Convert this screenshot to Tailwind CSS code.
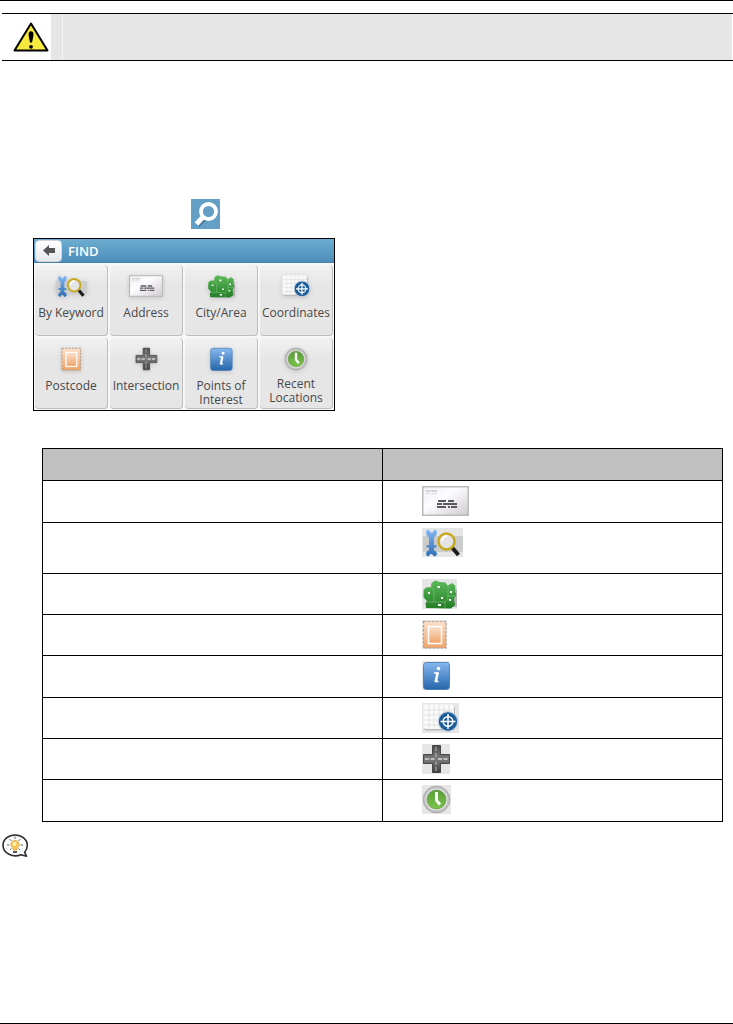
<!DOCTYPE html>
<html lang="en">
<head>
    <meta charset="UTF-8">
    <meta name="viewport" content="width=device-width, initial-scale=1.0">
    <title>Find</title>
    <script src="https://cdn.jsdelivr.net/npm/@tailwindcss/browser@4"></script>
</head>
<body class="bg-white font-['Open_Sans',sans-serif]">
    <!-- Shared icons -->
    <svg class="absolute size-0" aria-hidden="true">
        <defs>
            <linearGradient id="paper" x1="0" y1="0" x2="1" y2="1"><stop offset="0" stop-color="#f0eff1"/><stop offset=".4" stop-color="#fdfcfe"/><stop offset="1" stop-color="#cfcbd0"/></linearGradient>
            <linearGradient id="wrench" x1="0" y1="0" x2="0" y2="1"><stop offset="0" stop-color="#84b8f0"/><stop offset="1" stop-color="#2f6fb5"/></linearGradient>
            <linearGradient id="green" x1="0" y1="0" x2="0" y2="1"><stop offset="0" stop-color="#5dbb5a"/><stop offset="1" stop-color="#237d27"/></linearGradient>
            <linearGradient id="orange" x1="0" y1="0" x2="0" y2="1"><stop offset="0" stop-color="#fbe0cb"/><stop offset="1" stop-color="#efa468"/></linearGradient>
            <linearGradient id="blue" x1="0" y1="0" x2="0" y2="1"><stop offset="0" stop-color="#87b8ef"/><stop offset="1" stop-color="#2565ab"/></linearGradient>
            <linearGradient id="road" x1="0" y1="0" x2="0" y2="1"><stop offset="0" stop-color="#4b4b4b"/><stop offset=".5" stop-color="#7c7c7c"/><stop offset="1" stop-color="#3f3f3f"/></linearGradient>
            <linearGradient id="lime" x1="0" y1="0" x2="0" y2="1"><stop offset="0" stop-color="#5a9c3a"/><stop offset="1" stop-color="#7cc44c"/></linearGradient>
        </defs>
        <symbol id="address" viewBox="0 0 47 30">
            <rect x=".75" y=".75" width="45.5" height="28.5" fill="url(#paper)" stroke="#bcbabd" stroke-width="1.5"/>
            <path d="M4 5h4M9 5h6" stroke="#d3d1d4" stroke-width="2"/>
            <path d="M4 7.7h5M10 7.7h5" stroke="#dcdadd"/>
            <path d="M16 15h8M26 15h6M15 18h5M21 18h14M15 21h9M26 21h2M29 21h6" stroke="#5a585b" stroke-width="1.9"/>
        </symbol>
        <symbol id="keyword" viewBox="0 0 41 29">
            <path d="M1 8h40v16H1z" fill="#cccccd"/>
            <path d="M4 3L6.500 1.500 8.500 4.500h2L12.500 1.500 15 3 14.500 7 12 9.500V17h2.500v2.500H12V22l2.500 2L15 27l-3 1.500-2-2.500H8.500l-2 2.500L4 27l.5-3L7 22v-2.500H4.500V17H7V9.500L4.500 7z" fill="url(#wrench)"/>
            <path d="M30.500 20l6 7" stroke="#1c1c1c" stroke-width="4"/>
            <circle cx="24.500" cy="13.500" r="8" fill="#e4e4e4" stroke="#c7a91e" stroke-width="2.500"/>
            <path d="M20 13a5 5 0 0 1 5-5" fill="none" stroke="#fff" stroke-width="2"/>
        </symbol>
        <symbol id="city" viewBox="0 0 35 30">
            <path d="M7 10h28v18H9z" fill="#b5b5b5"/>
            <path d="M4 29L3.500 24 5 22 1.500 18.500V11L4 8.500 9 8 9.500 4 13 1.500 18 3 23.500 3.500 25.500 6.500 30.500 4 33.500 7 33 12 34.500 16 32 19.500 33 26 29 29.500z" fill="url(#green)"/>
            <path d="M9 8l3 4v11M4 23h19l3-3V7M26 17h8M23 23v6" fill="none" stroke="#78bd78" stroke-width=".7"/>
            <path d="M15.500 7h2.500v2h-2.500zM6 13h2v2H6zM28 12h2v2h-2zM19 18h2v2h-2zM27 20h2v2h-2zM16 25h3v2h-3z" fill="#fff"/>
        </symbol>
        <symbol id="postcode" viewBox="0 0 25 29">
            <rect x="1.500" y="1.500" width="22.500" height="26.500" fill="url(#orange)" stroke="#b39f90" stroke-width="1.200" stroke-dasharray="2.500 1.500"/>
            <rect x="6.500" y="6.500" width="13" height="17" fill="url(#orange)" stroke="#fff" stroke-width="1.500"/>
        </symbol>
        <symbol id="info" viewBox="0 0 28 29">
            <rect x="1.500" y="1.500" width="26" height="27" rx="3" fill="url(#blue)" stroke="#3f76b5" stroke-width=".8"/>
            <circle cx="16.500" cy="7.500" r="1.800" fill="#fff"/>
            <path d="M12 12h4.500M13.500 20.500h3" fill="none" stroke="#fff" stroke-width="1.500"/>
            <path d="M15.700 11.500l-2 9.500" stroke="#fff" stroke-width="2.600"/>
        </symbol>
        <symbol id="coords" viewBox="0 0 37 30">
            <rect x="2" y="2.500" width="31" height="25" rx="3" fill="#b9b9b9"/>
            <rect x="1.500" y="1.500" width="30.500" height="24.500" rx="3" fill="#fafafa"/>
            <path d="M7 2v24M12 2v24M17 2v24M22 2v24M27 2v24M2 7h30M2 12h30M2 17h30M2 22h30" stroke="#dcdcdc" stroke-width=".8"/>
            <circle cx="26" cy="18.500" r="9.800" fill="#1c5c99" stroke="#c5d3df" stroke-width="1.200"/>
            <circle cx="26" cy="18.500" r="4.800" fill="none" stroke="#fff" stroke-width="1.500"/>
            <path d="M26 11v15M18.500 18.500h15" stroke="#fff" stroke-width="1.500"/>
        </symbol>
        <symbol id="intersection" viewBox="0 0 28 30">
            <path d="M10.500 1.500h8v9h9v9h-9v9h-8v-9h-9v-9h9z" fill="url(#road)" stroke="#474747"/>
            <path d="M14 3v4M14 9v4M14 18v3M14 23v4" stroke="#c9c9c9" stroke-width=".9"/>
            <path d="M3 15h4M8.500 15h4M16 15h4M21.500 15h4" stroke="#fff" stroke-width="1.200"/>
        </symbol>
        <symbol id="recent" viewBox="0 0 29 29">
            <circle cx="14.500" cy="14.500" r="13.300" fill="#c2c2c2" stroke="#a8a8a8"/>
            <circle cx="14.500" cy="14.500" r="11" fill="#e3e3e3"/>
            <circle cx="14.500" cy="14.500" r="9.500" fill="url(#lime)" stroke="#538b38" stroke-width=".6"/>
            <path d="M14.500 7v8.500l3.500 4" fill="none" stroke="#fff" stroke-width="2.800"/>
        </symbol>
    </svg>

    <div class="flex min-h-screen flex-col border-t border-b border-black">
        <!-- Warning -->
        <div class="mt-3 ml-[2px] flex h-12 border-y border-black">
            <div class="flex w-[49px] items-center justify-center pl-2">
                <svg class="h-[30px] w-[36px]" viewBox="0 0 36 30" role="img" aria-label="Warning">
                    <path d="M18 1.500L34.500 28.500h-33z" fill="#f7e93d" stroke="#000" stroke-width="2" stroke-linejoin="round"/>
                    <path d="M18 9.200c3.300 0 2.800 3.500 1 11.300h-2c-1.800-7.800-2.300-11.300 1-11.300z"/>
                    <circle cx="18" cy="24.800" r="1.900"/>
                </svg>
            </div>
            <div class="w-3 border-r border-gray-100 bg-[#e6e6e6]"></div>
            <div class="mr-px flex-1 bg-[#e6e6e6]"></div>
        </div>

        <button class="mt-[138px] ml-[191px] h-[30px] w-[29px] bg-[#649fc5]" aria-label="Find">
            <svg viewBox="0 0 29 30">
                <path d="M14 18.500l-7.500 7.500" stroke="#3f7093" stroke-width="5"/>
                <path d="M13 17l-7.500 8" stroke="#fff" stroke-width="5"/>
                <circle cx="17.500" cy="12.500" r="7.500" fill="#649fc5" stroke="#fff" stroke-width="3.800"/>
            </svg>
        </button>

        <!-- Find menu -->
        <div class="mt-[9px] ml-[33px] w-[302px] border border-black bg-[#f7f7f7]">
            <div class="flex h-6 items-center gap-[6px] border-b border-[#447fa8] bg-linear-to-b from-[#6dadd0] to-[#4d8dbb] pl-px">
                <button class="flex h-[22px] w-[27px] items-center justify-center rounded-sm border border-gray-300 bg-linear-to-b from-white to-gray-200" aria-label="Back">
                    <svg class="h-[11px] w-3" viewBox="0 0 12 11"><path d="M0 5.500L6 0v3h6v5H6v3z" fill="#555"/></svg>
                </button>
                <span class="text-[13px] leading-4 font-semibold text-white">FIND</span>
            </div>
            <div class="grid grid-cols-4 gap-[2px] p-px pt-[2px] text-xs leading-[14px] text-[#484848]">
                <button class="flex h-[71px] flex-col items-center gap-2 rounded-sm border-r border-b border-[#bdbdbd] bg-linear-to-b from-[#f2f2f2] to-[#e6e6e6] to-30% pt-[9px]">
                    <svg class="h-6 w-8 drop-shadow-sm"><use href="#keyword"/></svg>
                    <span class="whitespace-nowrap">By Keyword</span>
                </button>
                <button class="flex h-[71px] flex-col items-center gap-2 rounded-sm border-r border-b border-[#bdbdbd] bg-linear-to-b from-[#f2f2f2] to-[#e6e6e6] to-30% pt-[9px]">
                    <svg class="h-6 w-[34px] drop-shadow-sm"><use href="#address"/></svg>
                    <span class="whitespace-nowrap">Address</span>
                </button>
                <button class="flex h-[71px] flex-col items-center gap-2 rounded-sm border-r border-b border-[#bdbdbd] bg-linear-to-b from-[#f2f2f2] to-[#e6e6e6] to-30% pt-[9px]">
                    <svg class="h-6 w-8 drop-shadow-sm"><use href="#city"/></svg>
                    <span class="whitespace-nowrap">City/Area</span>
                </button>
                <button class="flex h-[71px] flex-col items-center gap-2 rounded-sm border-r border-b border-[#bdbdbd] bg-linear-to-b from-[#f2f2f2] to-[#e6e6e6] to-30% pt-[9px]">
                    <svg class="h-6 w-8 drop-shadow-sm"><use href="#coords"/></svg>
                    <span class="whitespace-nowrap">Coordinates</span>
                </button>
                <button class="flex h-[71px] flex-col items-center gap-2 rounded-sm border-r border-b border-[#bdbdbd] bg-linear-to-b from-[#f2f2f2] to-[#e6e6e6] to-30% pt-[9px]">
                    <svg class="h-6 w-8 drop-shadow-sm"><use href="#postcode"/></svg>
                    <span class="whitespace-nowrap">Postcode</span>
                </button>
                <button class="flex h-[71px] flex-col items-center gap-2 rounded-sm border-r border-b border-[#bdbdbd] bg-linear-to-b from-[#f2f2f2] to-[#e6e6e6] to-30% pt-[9px]">
                    <svg class="h-6 w-8 drop-shadow-sm"><use href="#intersection"/></svg>
                    <span class="whitespace-nowrap">Intersection</span>
                </button>
                <button class="flex h-[71px] flex-col items-center gap-2 rounded-sm border-r border-b border-[#bdbdbd] bg-linear-to-b from-[#f2f2f2] to-[#e6e6e6] to-30% pt-[9px]">
                    <svg class="h-6 w-8 drop-shadow-sm"><use href="#info"/></svg>
                    <span class="whitespace-nowrap">Points of<br>Interest</span>
                </button>
                <button class="flex h-[71px] flex-col items-center gap-[6px] rounded-sm border-r border-b border-[#bdbdbd] bg-linear-to-b from-[#f2f2f2] to-[#e6e6e6] to-30% pt-[9px]">
                    <svg class="h-6 w-8 drop-shadow-sm"><use href="#recent"/></svg>
                    <span class="whitespace-nowrap">Recent<br>Locations</span>
                </button>
            </div>
        </div>

        <!-- Search types -->
        <div class="mt-[37px] mr-[10px] ml-[42px]">
            <table class="w-full table-fixed border-collapse [&_td]:border [&_td]:border-black [&_td]:p-0 [&_td]:pt-[5px] [&_td]:pl-[39px] [&_td]:align-top [&_th]:border [&_th]:border-black">
                <thead>
                    <tr class="h-8 bg-[#c0c0c0]"><th></th><th></th></tr>
                </thead>
                <tbody>
                    <tr class="h-[42px]"><td></td><td><svg class="block h-[30px] w-[47px]"><use href="#address"/></svg></td></tr>
                    <tr class="h-[51px]"><td></td><td><svg class="block h-[29px] w-[41px] bg-[#e6e6e6]"><use href="#keyword"/></svg></td></tr>
                    <tr class="h-[41px]"><td></td><td><svg class="block h-[30px] w-[35px] bg-[#e6e6e6]"><use href="#city"/></svg></td></tr>
                    <tr class="h-[41px]"><td></td><td><svg class="block h-[29px] w-[25px] bg-[#e6e6e6]"><use href="#postcode"/></svg></td></tr>
                    <tr class="h-[42px]"><td></td><td><svg class="block h-[29px] w-[28px] bg-[#e6e6e6]"><use href="#info"/></svg></td></tr>
                    <tr class="h-[41px]"><td></td><td><svg class="block h-[30px] w-[37px] bg-[#e6e6e6]"><use href="#coords"/></svg></td></tr>
                    <tr class="h-[41px]"><td></td><td><svg class="block h-[30px] w-[28px] bg-[#e6e6e6]"><use href="#intersection"/></svg></td></tr>
                    <tr class="h-[42px]"><td></td><td><svg class="block h-[29px] w-[29px] bg-[#e6e6e6]"><use href="#recent"/></svg></td></tr>
                </tbody>
            </table>
        </div>

        <!-- Tip -->
        <svg class="mt-3 ml-[2px] h-[24px] w-[27px]" viewBox="0 0 27 24" role="img" aria-label="Tip">
            <path d="M24.500 22.300l-5.500-1.500C11 24 1 19.500 1 11.300 1 5.500 6.500 1 13 1s12.300 4.500 12.300 10.300c0 3-1.200 5.200-2.600 7z" fill="#fff" stroke="#2d2d2d" stroke-width="1.600" stroke-linejoin="round"/>
            <path d="M13 2.500v2.500M7.500 5l2 2M18.500 5l-2 2M5 11h2.500M18.500 11H21M8 16l1.500-1.500M18 16l-1.500-1.500" stroke="#666"/>
            <path d="M13 6.500c-4 0-5.200 4-3 6.500 1 1 1 2 1 3h4c0-1 0-2 1-3 2.200-2.500 1-6.500-3-6.500z" fill="#fcc64f" stroke="#c99038" stroke-width=".6"/>
            <circle cx="12.500" cy="10" r="2" fill="#fff0b8"/>
            <path d="M11 17h4v2h-4z" fill="#555"/>
        </svg>
    </div>
</body>
</html>
